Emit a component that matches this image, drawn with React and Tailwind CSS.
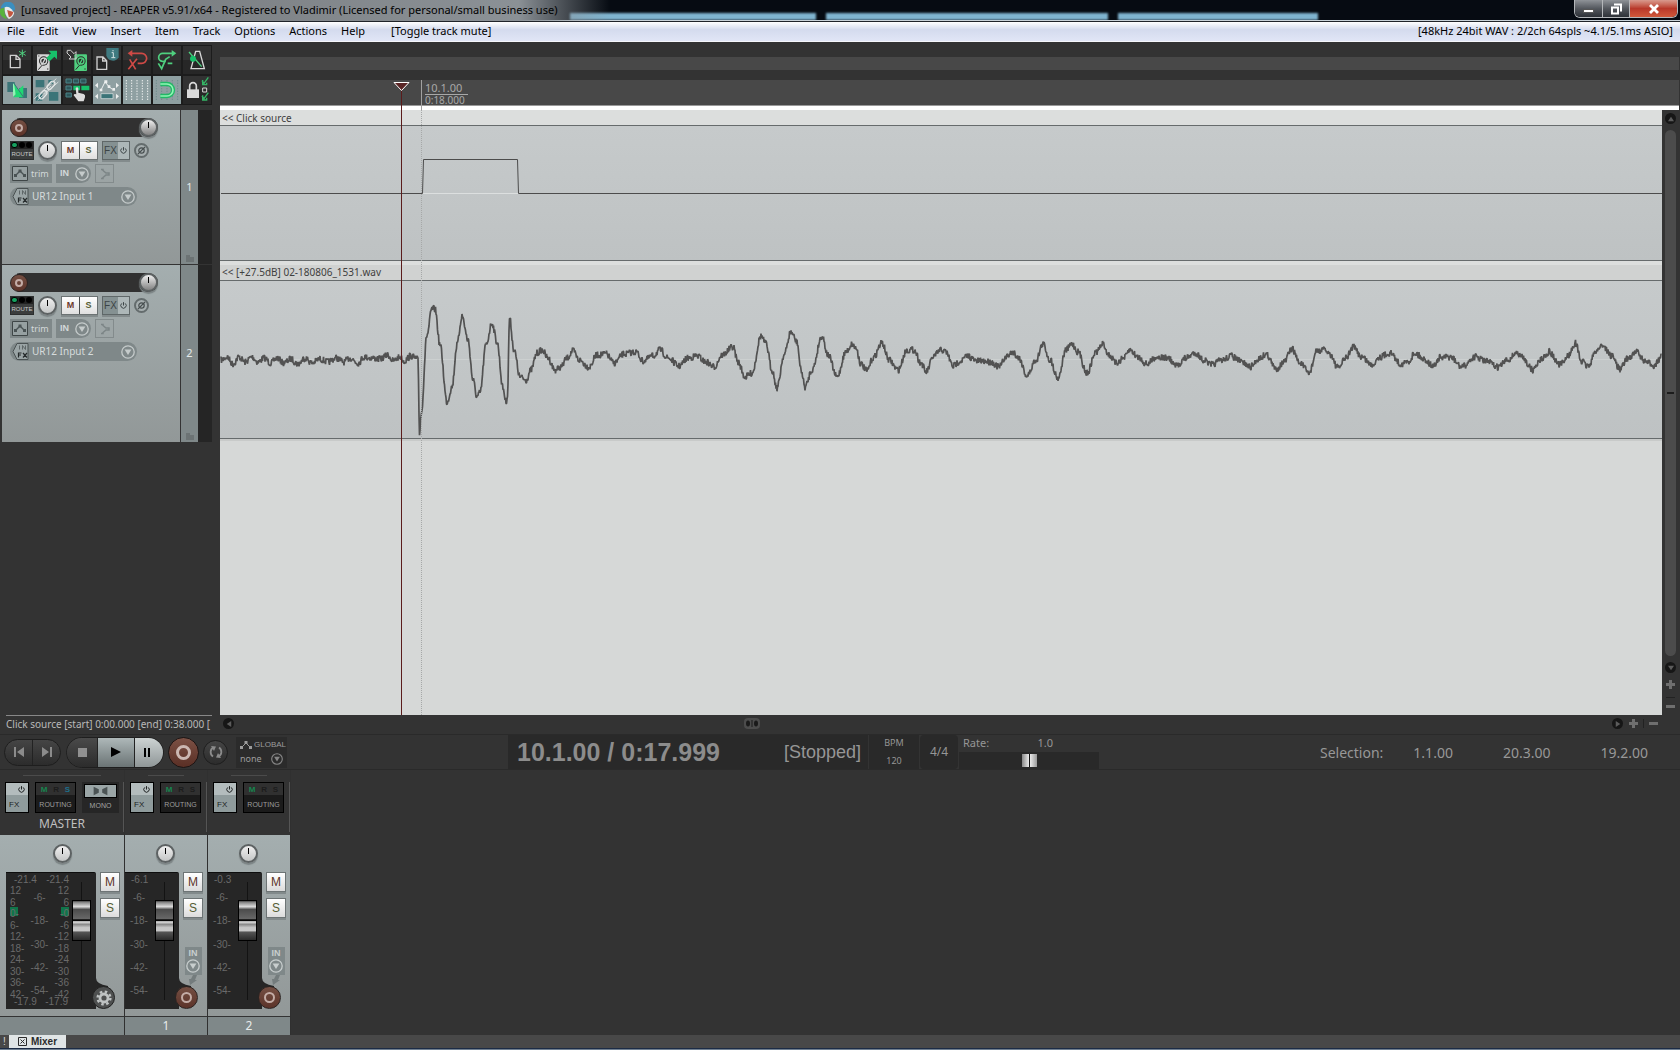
import React from 'react'

const MENU = ['File', 'Edit', 'View', 'Insert', 'Item', 'Track', 'Options', 'Actions', 'Help']

// [x, y] turning points of the recorded ringing
const WAVE = [
    221, 360, 227, 357, 233, 364, 239, 357, 245, 362, 252, 357, 258, 362, 264, 358, 271, 363, 277, 358, 284, 363, 291, 359,
    298, 364, 305, 358, 312, 363, 320, 359, 328, 362, 336, 358, 344, 362, 350, 358, 358, 363, 364, 357, 372, 358, 380, 359,
    388, 355, 393, 361, 400, 357, 404, 361, 411, 356, 417, 359, 418, 361, 419.5, 433, 421, 415, 427, 335, 432, 309, 435, 309,
    440, 345, 447, 402, 452, 387, 457, 345, 462, 316, 468, 340, 473, 380, 477, 397, 480, 393, 486, 345, 492, 323, 497, 342,
    503, 388, 506, 402, 507.5, 395, 509.5, 318, 514, 350, 520, 377, 526, 380, 531, 370, 537, 353, 542, 350, 548, 358, 555, 370,
    561, 367, 567, 358, 573, 351, 579, 360, 589, 367, 597, 355, 606, 354, 614, 363, 624, 354, 636, 352, 643, 361, 653, 356,
    660, 350, 668, 358, 679, 366, 688, 358, 697, 356, 706, 362, 714, 367, 722, 355, 733, 347, 738, 362, 745, 377, 752, 373,
    761, 336, 766, 344, 772, 370, 777, 388, 784, 355, 791, 332, 797, 342, 801, 370, 805, 387, 812, 370, 822, 336, 828, 355,
    837, 377, 846, 352, 852, 344, 856, 348, 861, 364, 867, 371, 873, 358, 882, 343, 889, 360, 898, 370, 907, 350, 914, 350,
    921, 363, 926, 372, 934, 356, 941, 350, 946, 352, 953, 366, 960, 361, 968, 356, 976, 361, 984, 361, 991, 362, 999, 367,
    1006, 357, 1013, 352, 1019, 358, 1027, 376, 1036, 360, 1043, 344, 1050, 360, 1058, 378, 1066, 350, 1072, 344, 1078, 352,
    1087, 373, 1096, 352, 1103, 344, 1109, 355, 1116, 363, 1124, 358, 1130, 350, 1138, 357, 1147, 364, 1156, 357, 1168, 358,
    1176, 366, 1186, 358, 1195, 353, 1204, 360, 1211, 365, 1222, 360, 1231, 356, 1242, 362, 1250, 367, 1260, 358, 1266, 354,
    1276, 369, 1284, 362, 1292, 349, 1300, 363, 1309, 373, 1317, 351, 1325, 350, 1330, 354, 1338, 368, 1346, 358, 1353, 347,
    1362, 357, 1372, 365, 1379, 357, 1390, 353, 1401, 364, 1408, 362, 1415, 353, 1424, 359, 1433, 366, 1440, 358, 1450, 357,
    1462, 367, 1475, 357, 1486, 361, 1498, 367, 1508, 360, 1516, 353, 1522, 357, 1533, 370, 1540, 360, 1549, 352, 1560, 365,
    1569, 355, 1575, 343, 1582, 362, 1588, 366, 1597, 350, 1602, 345, 1612, 356, 1620, 369, 1628, 358, 1637, 352, 1645, 362,
    1654, 365, 1662, 357,
]

const buildWave = () => {
    let seed = 7
    const rand = () => {
        seed = (seed * 16807) % 2147483647
        return seed / 2147483647 - 0.5
    }
    let d = ''
    for (let i = 0; i < WAVE.length - 2; i += 2) {
        const [x0, y0, x1, y1] = WAVE.slice(i, i + 4)
        const steps = Math.max(1, Math.round((x1 - x0) / 0.5))
        for (let s = 0; s < steps; s++) {
            const t = s / steps
            const k = (1 - Math.cos(Math.PI * t)) / 2
            const y = y0 + (y1 - y0) * k + rand() * 7
            d += `${d ? 'L' : 'M'}${(x0 + (x1 - x0) * t).toFixed(1)} ${y.toFixed(1)}`
        }
    }
    return d
}

const wavePath = buildWave()

const G = '#4fd07f'
const T = '#3b7478'

const Disk = ({ x, y, c }) => (
    <g transform={`translate(${x} ${y})`}>
        <rect width="38" height="50" rx="3" fill={c} />
        <circle cx="20" cy="20" r="14" fill="#2a2a2a" />
        <circle cx="20" cy="20" r="9" fill="none" stroke={c} strokeWidth="4" />
        <path d="M24 14L10 40l-6 2" stroke={c} strokeWidth="4" fill="none" />
        <path d="M4 46L16 32M30 44h4M4 5h3" stroke="#2a2a2a" strokeWidth="3" />
    </g>
)

const Doc = ({ x, y }) => (
    <path transform={`translate(${x} ${y})`} d="M2 2h18l11 11v26H2zM19 2v12h12" fill="none" stroke="#d0d0d0" strokeWidth="4" />
)

const TOOLS = [
    ['New project', false, <><Doc x={20} y={26} /><path d="M58 11v22M48 16l20 12M68 16L48 28" stroke={G} strokeWidth="3" /></>],
    ['Open project', false, <><Disk x={12} y={25} c="#d6d6d6" /><path d="M46 14h26v26l-8-8-14 14-10-10 14-14z" fill="#17c06a" /></>],
    ['Save project', false, <><Disk x={34} y={25} c={G} /><path d="M13 13h10l10 10 6-6v22H18l6-6-12-12z" fill="none" stroke="#d0d0d0" strokeWidth="3" /></>],
    ['Project settings', false, <><Doc x={10} y={31} /><path d="M40 6h37v28a20 20 0 0 1-37-6z" fill="#3f7a80" /><path d="M60 12v4M56 20h5v14M55 35h12" stroke="#d8e6e6" strokeWidth="3" fill="none" /></>],
    ['Undo', false, <><path d="M22 22h34a14 14 0 0 1 0 30H44" fill="none" stroke="#cf4a46" strokeWidth="5" /><path d="M28 12L14 22l14 10z" fill="#cf4a46" /><path d="M20 40l18 30M42 38L16 70" stroke="#cf4a46" strokeWidth="5" /></>],
    ['Redo', false, <><path d="M62 22H30a12 12 0 0 0-2 24h10" fill="none" stroke={G} strokeWidth="5" /><path d="M56 12l14 10-14 10z" fill={G} /><path d="M16 52l10 16 12-28 12-8M44 52h14" fill="none" stroke={G} strokeWidth="5" /></>],
    ['Metronome', false, <><path d="M38 16h12l14 52H24z" fill="none" stroke="#d6d6d6" strokeWidth="4" /><path d="M56 62L18 18" stroke={G} strokeWidth="4" /><circle cx="30" cy="38" r="9" fill="#17c06a" /></>],
    ['Auto-crossfade', true, <><path d="M13 18h22v30H13zM48 36h24v30H48z" fill={T} /><path d="M30 20v42l16-16z" fill="#8ff5b4" /><path d="M33 20l12 22 16-14v36H30l8-8z" fill="#1fd873" /><path d="M30 18l32 46" stroke={T} strokeWidth="3" /></>],
    ['Item grouping', true, <><path d="M8 12h26v22H8zM46 12h14v12H46zM48 48h28v26H48zM8 52h20v22H8z" fill={T} /><g fill="none" stroke="#e2e6e6" strokeWidth="4"><rect x="-14" y="-7" width="28" height="14" rx="7" transform="translate(54 28) rotate(-48)" /><rect x="-14" y="-7" width="28" height="14" rx="7" transform="translate(30 56) rotate(-48)" /><path d="M32 54L54 30M4 68L70 8M14 72l62-54" strokeWidth="2.5" /></g></>],
    ['Ripple editing', false, <><path d="M9 9h16v12H9zM31 9h16v12H31zM53 9h16v12H53zM9 30h16v12H9zM9 51h16v12H9z" fill="#2d565a" stroke="#4b8488" strokeWidth="3" /><path d="M31 29h20v14H31zM55 29h24v14H55z" fill="#17c06a" /><path d="M38 36q5-5 8 1v13l16 4q6 2 4 10l-4 12H46L32 58q1-6 8-3z" fill="#dcdcdc" /></>],
    ['Envelope move', true, <><path d="M24 42l12-24 12 14 10 8" fill="none" stroke="#eef0f0" strokeWidth="3" /><path d="M34 13h9v9h-9zM44 28h8v8h-8zM20 38h8v8h-8zM58 36h8v8h-8zM6 28l9-8v16zM78 28l-9-8v16zM6 61l9-8v16zM78 61l-9-8v16z" fill="#eef0f0" /><path d="M24 53h36v15H24z" fill={T} stroke="#e6eaea" strokeWidth="2" /></>],
    ['Grid', true, <path d="M10 12v62M26 12v62M42 12v62M58 12v62M74 12v62" stroke="#f0f2f2" strokeWidth="3" strokeDasharray="4 4" />],
    ['Snap', true, <><path d="M10 12v62M26 12v62M42 12v62M58 12v62M74 12v62" stroke="#6f8b8c" strokeWidth="3" strokeDasharray="4 4" /><path d="M22 24h20a17 17 0 0 1 0 36H22" fill="none" stroke="#22b866" strokeWidth="13" /><path d="M22 24h20a17 17 0 0 1 0 36H22" fill="none" stroke="#8ff5b4" strokeWidth="5" /></>],
    ['Locking', false, <><path d="M12 40h36v26H12z" fill="#dadada" /><path d="M20 42V30a10 10 0 0 1 20 0v12" fill="none" stroke="#dadada" strokeWidth="5" /><path d="M59 36h12v12H59z" fill="none" stroke="#dadada" strokeWidth="3" /><path d="M57 14l6 8L76 4M57 60l6 8L76 50M59 12v14h12V20M59 58v14h12v-7" fill="none" stroke="#35b465" strokeWidth="4" /></>],
]

const Power = ({ className }) => (
    <svg viewBox="0 0 12 12" className={className} fill="none" stroke="currentColor" strokeWidth="1.3">
        <path d="M6 1.5v4.5M3.7 3.2a3.6 3.6 0 1 0 4.6 0" />
    </svg>
)

const Drop = ({ className }) => (
    <svg viewBox="0 0 14 14" className={className}>
        <circle cx="7" cy="7" r="6.2" fill="none" stroke="currentColor" strokeWidth="1.3" />
        <path d="M3.6 4.5h6.8L7 10z" fill="currentColor" />
    </svg>
)

const Knob = ({ label, className }) => (
    <button aria-label={label} className={`rounded-full border-2 border-[#5d6263] flex justify-center pt-[2px] shadow-[0_2px_1px_#7c8485] ${className}`}>
        <span className="w-px h-[6px] bg-black" />
    </button>
)

const RecButton = ({ className }) => (
    <button aria-label="Record arm" className={`rounded-full bg-linear-to-b from-[#744f43] to-[#5c3329] border border-[#2c2422] flex items-center justify-center ${className}`}>
        <span className="w-1/2 h-1/2 rounded-full border-2 border-[#c3aca6]" />
    </button>
)

const TrackPanel = ({ num, input, className }) => (
    <div className={`flex ${className}`}>
        <div className="w-[178px] bg-linear-to-b from-[#a4aeaf] to-[#929898] pl-2 pt-2">
            <div className="flex items-center justify-between w-[148px] h-[19px] bg-linear-to-r from-transparent from-5% via-[#313131] via-5% to-[#313131] rounded-full">
                <RecButton className="w-[18px] h-[18px]" />
                <Knob label="Volume" className="w-[19px] h-[19px] bg-linear-to-b from-[#f0f0f0] to-[#828282] border-[#2f3030]" />
            </div>
            <div className="flex items-center h-[19px] mt-1">
                <button className="w-6 h-[19px] bg-[#3b3d3d] border border-[#2c2e2e] text-[#c7caca] font-['Liberation_Sans'] text-[6px] leading-[9px] flex flex-col items-center justify-between">
                    <span className="w-full flex gap-px h-[7px] bg-[#222]">
                        <span className="w-[7px] h-[6px] rounded-full bg-[#16a05e] border border-black" />
                        <span className="w-[6px] h-[6px] rounded-full bg-black" />
                        <span className="w-[6px] h-[6px] rounded-full bg-black" />
                    </span>
                    ROUTE
                </button>
                <Knob label="Pan" className="ml-1 w-[19px] h-[19px] bg-linear-to-b from-[#efefef] to-[#c4c6c6]" />
                <div className="ml-1 flex border border-[#6b7273] divide-x divide-[#4b4f4f] font-['Liberation_Sans'] font-bold text-[9px] shadow-[0_2px_0_#838b8c]">
                    <button className="w-[18px] h-[17px] bg-linear-to-b from-white to-[#dfdfdf] text-[#6b3a2c]">M</button>
                    <button className="w-[17px] h-[17px] bg-linear-to-b from-white to-[#dfdfdf] text-[#565d34]">S</button>
                </div>
                <div className="ml-1 flex border border-[#5f6768] font-['Liberation_Sans'] text-[10px] text-[#3c4446] shadow-[0_2px_0_#838b8c]">
                    <button className="w-[15px] h-[17px] bg-[#859192]">FX</button>
                    <button aria-label="FX bypass" className="w-[11px] h-[17px] bg-[#adb7b8] flex items-center justify-center"><Power className="w-[9px] h-[9px]" /></button>
                </div>
                <button aria-label="Phase" className="ml-1 w-[15px] h-[15px] rounded-full border-2 border-[#646c6d] bg-[#a6aeaf] flex items-center justify-center">
                    <svg viewBox="0 0 10 10" className="w-[9px] h-[9px]" fill="none" stroke="#454c4d" strokeWidth="1.3"><circle cx="5" cy="5" r="3" /><path d="M1 9l8-8" /></svg>
                </button>
            </div>
            <div className="flex items-center h-[19px] mt-1 gap-1 text-[#d3d9d9] text-[9px]">
                <button className="w-[42px] h-[19px] bg-[#7f8889] flex items-center gap-[3px] pl-[2px]">
                    <svg viewBox="0 0 16 15" className="w-4 h-[15px]">
                        <path d="M.5.5h15v14H.5z" fill="#96a0a1" stroke="#3f4647" />
                        <path d="M3 10l5-5 5 5" fill="none" stroke="#4a5354" strokeWidth="1.4" />
                        <path d="M2 8h3v3H2zM6.500 3.500h3v3h-3zM11 8h3v3h-3z" fill="#4a5354" />
                    </svg>
                    trim
                </button>
                <button className="w-[35px] h-[19px] bg-[#7f8889] rounded-r-full flex items-center justify-between pl-1 pr-[2px] font-['Liberation_Sans'] font-bold">
                    IN<Drop className="w-[14px] h-[14px] text-[#c5cbcb]" />
                </button>
                <button aria-label="Record mode" className="w-[19px] h-[19px] border border-[#838b8c] flex items-center justify-center">
                    <svg viewBox="0 0 12 12" className="w-3 h-3" fill="none" stroke="#7c8586" strokeWidth="1.5"><path d="M2 1.500h2v1l3 2.500h3v2H7L4 9.500v1H2" /></svg>
                </button>
            </div>
            <button className="mt-1 w-[127px] h-[19px] bg-[#7f8889] rounded-full flex items-center pl-[2px] pr-[2px] text-[10px] text-[#d6dcdc]">
                <svg viewBox="0 0 17 17" className="w-[17px] h-[17px]" fill="none">
                    <path d="M5 .5h11v16H5l-4-8z" fill="#9aa4a5" stroke="#4b5253" />
                    <path d="M7.500 2.500v4M10.500 6.500v-4l3 4v-4" stroke="#5f6768" />
                    <path d="M6.500 14.500v-4.500h3M6.500 12h2.500M11 10l4 4.500M15 10l-4 4.500" stroke="#262b2c" strokeWidth="1.200" />
                </svg>
                <span className="ml-[3px]">{input}</span>
                <Drop className="ml-auto w-[14px] h-[14px] text-[#c5cbcb]" />
            </button>
        </div>
        <div className="ml-px w-[17px] bg-[#7f8889] flex flex-col items-center text-[11px] text-[#e4e8e8]">
            <span className="my-auto">{num}</span>
            <svg viewBox="0 0 8 7" className="w-2 h-[7px] mb-[2px] -mt-[9px]"><path d="M0 0h4v2h4v5H0z" fill="#6c7374" /></svg>
        </div>
        <div className="w-[14px] bg-[#252525]" />
    </div>
)

const ScrollArrow = ({ dir, label }) => (
    <button aria-label={label} className="w-[11px] h-[11px] rounded-full bg-[#161616] flex items-center justify-center">
        <svg viewBox="0 0 8 8" className="w-[6px] h-[6px]" fill="#5c5c5c"><path d={dir} /></svg>
    </button>
)

const UP = 'M4 1l4 6H0z'
const DOWN = 'M0 1h8L4 7z'
const LEFT = 'M7 0v8L1 4z'
const RIGHT = 'M1 0v8l6-4z'

const Plus = () => <button aria-label="Zoom in" className="w-[9px] h-[9px]"><svg viewBox="0 0 9 9" fill="#6f6f6f"><path d="M3 0h3v3h3v3H6v3H3V6H0V3h3z" /></svg></button>
const Minus = () => <button aria-label="Zoom out" className="w-[9px] h-[3px] bg-[#6f6f6f]" />

const Fader = ({ label }) => (
    <div className="relative w-[19px] h-[118px] bg-linear-to-r from-transparent from-45% via-black via-45% to-transparent to-55%">
        <input
            type="range"
            aria-label={label}
            defaultValue="77"
            className="absolute inset-0 w-[19px] h-[118px] appearance-none bg-transparent [writing-mode:vertical-lr] [direction:rtl] [&::-webkit-slider-thumb]:appearance-none [&::-webkit-slider-thumb]:w-[19px] [&::-webkit-slider-thumb]:h-[41px] [&::-webkit-slider-thumb]:border [&::-webkit-slider-thumb]:border-black [&::-webkit-slider-thumb]:bg-[linear-gradient(#4a4a4a_0%,#8a8a8a_4%,#d8d8d8_14%,#8c8c8c_19%,#4a4a4a_20%,#686868_46%,#050505_48%,#050505_51%,#e8e8e8_53%,#8a8a8a_60%,#c4c4c4_68%,#c8c8c8_76%,#555_80%,#2b2b2b_100%)]"
        />
    </div>
)

const Routing = ({ solo }) => (
    <button className="w-[41px] h-[31px] border border-black bg-[#1b1b1b] text-[#9d9d9d] font-['Liberation_Sans'] text-[7px] flex flex-col justify-start">
        <span className="w-full shrink-0 flex justify-around h-3 leading-[13px] bg-[#303030] px-[2px] text-[8px] font-bold">
            <span className="text-[#17854f]">M</span>
            <span className="text-[#1c1c1c]">R</span>
            <span className={solo}>S</span>
        </span>
        <span className="w-full leading-5">ROUTING</span>
    </button>
)

const FxButton = () => (
    <button className="w-6 h-[31px] border border-black bg-[#8f9b9c] text-[#1c1f1f] font-['Liberation_Sans'] text-[8px] flex flex-col justify-start items-start">
        <span className="w-full h-3 shrink-0 bg-[#b3bcbd] flex items-center justify-end pr-[2px]"><Power className="w-[9px] h-[9px]" /></span>
        <span className="pl-[3px] leading-5">FX</span>
    </button>
)

const MuteSolo = ({ children }) => (
    <div className="flex flex-col items-center font-['Liberation_Sans'] text-xs">
        <button className="w-5 h-5 bg-linear-to-b from-white to-[#dcdcdc] border border-[#6d7475] text-[#5b3428] shadow-[0_2px_0_#828a8b]">M</button>
        <button className="mt-[6px] w-5 h-5 bg-linear-to-b from-white to-[#dcdcdc] border border-[#6d7475] text-[#565d34] shadow-[0_2px_0_#828a8b]">S</button>
        {children}
    </div>
)

const Corner = () => (
    <svg viewBox="0 0 12 12" className="absolute left-full bottom-[19px] w-3 h-3"><path d="M0 0q0 6 12 8v4H0z" fill="#262626" /></svg>
)

const DB = ['-6-', '-18-', '-30-', '-42-', '-54-']

const Scale = ({ values, className }) => (
    <div className={`flex flex-col justify-between leading-[10px] ${className}`}>
        {values.map((v, i) => <span key={i}>{v}</span>)}
    </div>
)

const MixerStrip = ({ num, peak }) => (
    <div className="w-[83px] flex flex-col border-r border-[#303030]">
        <div className="h-[65px] bg-[#333] pt-[5px]">
            <div className="mx-auto w-9 h-px bg-[#4b4b4b]" />
            <div className="mt-[6px] h-[50px] flex gap-[6px] pl-[5px] border-r border-[#555]">
                <FxButton />
                <Routing solo="text-[#1c1c1c]" />
            </div>
        </div>
        <div className="h-[181px] bg-linear-to-b from-[#a4aeaf] to-[#929898] flex flex-col pt-[9px]">
            <Knob label="Pan" className="ml-[31px] w-[19px] h-[19px] bg-linear-to-b from-[#efefef] to-[#c4c6c6]" />
            <div className="flex mt-[9px] gap-1">
                <div className="relative w-[54px] h-[137px] bg-[#262626] border-t border-[#0d0d0d] rounded-tr-xs font-['Liberation_Sans'] text-[10px] text-[#6a6a6a] flex">
                    <div className="w-[30px] pl-[6px] pt-[2px]">
                        <div className="leading-[10px]">{peak}</div>
                        <Scale values={DB} className="mt-2 h-[103px] items-center w-4" />
                    </div>
                    <div className="pt-[9px]"><Fader label={`Volume ${num}`} /></div>
                    <Corner />
                    <RecButton className="absolute -right-[19px] bottom-0 w-[23px] h-[23px]" />
                </div>
                <MuteSolo>
                    <button className="mt-[29px] w-[17px] h-7 bg-[#7f8889] text-[#c8cece] text-[9px] font-bold flex flex-col items-center">
                        IN<Drop className="w-[14px] h-[14px] shrink-0" />
                    </button>
                    <svg viewBox="0 0 8 10" className="w-2 h-[10px]"><path d="M4 0h4L6 5h2L1 10 0 4h2z" fill="#747c7d" /></svg>
                </MuteSolo>
            </div>
        </div>
        <div className="mt-px h-[18px] bg-[#7f8889] text-center text-xs leading-[18px] text-[#e8ecec]">{num}</div>
    </div>
)

const LEFT_DB = ['12', '6', '0-', '6-', '12-', '18-', '24-', '30-', '36-', '42-']
const RIGHT_DB = ['12', '6', '-0', '-6', '-12', '-18', '-24', '-30', '-36', '-42']

const MasterStrip = () => (
    <div className="w-[125px] flex flex-col border-r border-[#303030]">
        <div className="h-[65px] bg-[#333] pt-[5px]">
            <div className="mx-auto w-[78px] h-px bg-[#4b4b4b]" />
            <div className="mt-[6px] h-[50px] pl-[5px] border-r border-[#555]">
                <div className="flex gap-[6px]">
                    <FxButton />
                    <Routing solo="text-[#1d6f8c]" />
                    <button className="w-[37px] h-[31px] bg-[#262626] text-[#a4a4a4] font-['Liberation_Sans'] text-[7px] px-[2px] pt-[2px]">
                        <svg viewBox="0 0 32 14" className="block w-full h-[14px] bg-[#9aa5a6] border border-black"><path d="M8 2l6 3v4l-6 3zM24 2l-6 3v4l6 3z" fill="#4b5354" /></svg>
                        <span className="block leading-[15px]">MONO</span>
                    </button>
                </div>
                <div className="text-xs leading-[22px] text-center text-[#c0c0c0] pr-1">MASTER</div>
            </div>
        </div>
        <div className="h-[181px] bg-linear-to-b from-[#a4aeaf] to-[#929898] flex flex-col pt-[9px]">
            <Knob label="Master pan" className="mx-auto w-[19px] h-[19px] bg-linear-to-b from-[#efefef] to-[#c4c6c6]" />
            <div className="flex mt-[9px] pl-[6px] gap-1">
                <div className="relative w-[90px] h-[137px] bg-[#262626] border-t border-[#0d0d0d] rounded-tr-xs font-['Liberation_Sans'] text-[10px] text-[#6a6a6a] flex">
                    <div className="w-[66px] pl-1 pr-[3px] pt-[2px]">
                        <div className="flex justify-between pl-1 leading-[10px]"><span>-21.4</span><span>-21.4</span></div>
                        <div className="flex justify-between mt-px h-[114px]">
                            <Scale values={LEFT_DB} className="h-[114px] w-4 bg-[linear-gradient(#10754a,#10754a)] bg-no-repeat bg-size-[8px_9px] bg-position-[0_21px]" />
                            <Scale values={DB} className="mt-[7px] h-[103px] items-center" />
                            <Scale values={RIGHT_DB} className="h-[114px] w-4 items-end bg-[linear-gradient(#10754a,#10754a)] bg-no-repeat bg-size-[8px_9px] bg-position-[8px_21px]" />
                        </div>
                        <div className="absolute bottom-[2px] left-2 w-[54px] flex justify-between leading-[10px]"><span>-17.9</span><span>-17.9</span></div>
                    </div>
                    <div className="pt-[9px]"><Fader label="Master volume" /></div>
                    <Corner />
                    <button aria-label="Master settings" className="absolute -right-[19px] bottom-0 w-[23px] h-[23px] rounded-full bg-[#4e5050] border border-[#222] flex items-center justify-center">
                        <svg viewBox="0 0 20 20" className="w-4 h-4" fill="none" stroke="#bfc3c3">
                            <circle cx="10" cy="10" r="5" strokeWidth="3.500" />
                            <circle cx="10" cy="10" r="8" strokeWidth="3" strokeDasharray="3.140 3.140" />
                        </svg>
                    </button>
                </div>
                <MuteSolo />
            </div>
        </div>
        <div className="mt-px h-[18px] bg-[#7f8889]" />
    </div>
)

const TitleBar = () => (
    <div className="flex items-start justify-between h-[22px] bg-[#060b12] border-b border-[#20242a] relative overflow-hidden">
        <div className="absolute inset-x-0 bottom-px flex h-[7px] pl-[570px] gap-[10px] blur-[1px]">
            <span className="w-[246px] bg-[#7fb4cf]" />
            <span className="w-[282px] bg-[#7fb4cf]" />
            <span className="w-[200px] bg-[#7fb4cf]" />
        </div>
        <div className="absolute inset-x-0 bottom-0 h-px bg-[#c9d2d8]" />
        <div className="relative flex items-center h-[21px] w-[610px] bg-linear-to-r from-[#74777a] via-[#8b9196] via-85% to-transparent">
            <svg viewBox="0 0 18 18" className="w-4 h-[18px]">
                <path d="M1 6a8 8 0 0 1 16 1l-3 3-5-4z" fill="#3b8fc0" />
                <path d="M5 5q4-2 8 2l3 4q-1 5-6 7-5-4-5-13z" fill="#e6eaea" />
                <path d="M0 7l5-2q-1 8 3 13a9 9 0 0 1-8-11z" fill="#58b33c" />
                <path d="M8 8l7 2q-1 5-5 6z" fill="#c2563f" />
            </svg>
            <span className="ml-[5px] text-[11px] text-black whitespace-nowrap">
                [unsaved project] - REAPER v5.91/x64 - Registered to Vladimir (Licensed for personal/small business use)
            </span>
        </div>
        <div className="relative flex mr-[2px] h-[18px] border border-t-0 border-[#b4b7ba] rounded-b-md overflow-hidden divide-x divide-[#b4b7ba]">
            <button aria-label="Minimize" className="w-7 bg-linear-to-b from-[#8f9398] via-[#54585e] via-50% to-[#2e3238] flex justify-center items-end pb-1"><span className="w-[11px] h-[4px] bg-white border border-[#555]" /></button>
            <button aria-label="Restore" className="w-[27px] bg-linear-to-b from-[#8f9398] via-[#54585e] via-50% to-[#2e3238] flex justify-center items-center">
                <svg viewBox="0 0 12 12" className="w-3 h-3" fill="none" stroke="#fff" strokeWidth="2"><path d="M2 4.500h6v6H2zM4 1.500h7v7" /></svg>
            </button>
            <button aria-label="Close" className="w-[47px] bg-linear-to-b from-[#d89a8e] via-[#b8382a] via-50% to-[#d0583a] flex justify-center items-center">
                <svg viewBox="0 0 12 10" className="w-3 h-[10px]" stroke="#fff" strokeWidth="2.800"><path d="M2 1l8 8M10 1L2 9" /></svg>
            </button>
        </div>
    </div>
)

const Transport = () => (
    <div className="flex items-start h-9 bg-[#333] border-y border-[#2a2a2a]">
        <div className="flex items-center h-[34px] pl-1 w-[508px] shrink-0">
            <div className="flex h-[27px] w-[57px] rounded-full overflow-hidden border border-[#1e1e1e] bg-linear-to-b from-[#454545] to-[#2c2c2c] divide-x divide-[#222]">
                <button aria-label="Go to start" className="flex-1 flex items-center justify-center"><svg viewBox="0 0 12 10" className="w-3 h-[10px]" fill="#8b8b8b"><path d="M1 0h2v10H1zM11 0v10L4 5z" /></svg></button>
                <button aria-label="Go to end" className="flex-1 flex items-center justify-center"><svg viewBox="0 0 12 10" className="w-3 h-[10px]" fill="#8b8b8b"><path d="M9 0h2v10H9zM1 0v10l7-5z" /></svg></button>
            </div>
            <div className="ml-[5px] flex h-[31px] w-[98px] rounded-full overflow-hidden border border-[#1e1e1e] divide-x divide-[#222]">
                <button aria-label="Stop" className="w-[31px] bg-linear-to-b from-[#4a4a4a] to-[#2c2c2c] flex items-center justify-center"><span className="w-[9px] h-[9px] bg-[#909090]" /></button>
                <button aria-label="Play" className="w-[37px] bg-linear-to-b from-[#aeb8b9] to-[#6b7475] flex items-center justify-center"><svg viewBox="0 0 10 10" className="w-[10px] h-[10px]"><path d="M0 0v10l10-5z" /></svg></button>
                <button aria-label="Pause" className="flex-1 bg-linear-to-b from-[#cdd3d3] to-[#8f9697] flex items-center justify-center gap-[2px] pr-1"><span className="w-[2px] h-[9px] bg-black" /><span className="w-[2px] h-[9px] bg-black" /></button>
            </div>
            <button aria-label="Record" className="ml-1 w-[31px] h-[31px] rounded-full border border-[#1d1514] bg-linear-to-b from-[#7c5145] to-[#5a2f25] flex items-center justify-center"><span className="w-[15px] h-[15px] rounded-full border-[3px] border-[#cbb7b1]" /></button>
            <button aria-label="Repeat" className="ml-1 w-[25px] h-[25px] rounded-full border border-[#1e1e1e] bg-linear-to-b from-[#454545] to-[#2c2c2c] flex items-center justify-center">
                <svg viewBox="0 0 14 14" className="w-[14px] h-[14px]" fill="none" stroke="#8b8b8b" strokeWidth="1.800"><path d="M4 11.500A5.300 5.300 0 0 1 4.500 2.400M10 2.500a5.300 5.300 0 0 1-.5 9.100" /><path d="M2 1l5 .5L5 6zM12 13l-5-.5L9 8z" fill="#8b8b8b" stroke="none" /></svg>
            </button>
            <button className="ml-2 w-[51px] h-[31px] bg-[#2b2b2b] text-[#9c9c9c] text-[9px] px-1">
                <span className="flex items-center gap-[2px] font-['Liberation_Sans'] text-[8px] h-[14px]">
                    <svg viewBox="0 0 12 8" className="w-3 h-2 shrink-0"><path d="M2 6l4-4 4 4" fill="none" stroke="#9c9c9c" /><path d="M0 5h3v3H0zM4.500 0h3v3h-3zM9 5h3v3H9z" fill="#9c9c9c" /></svg>
                    GLOBAL
                </span>
                <span className="flex items-center justify-between h-[15px]">none<Drop className="w-3 h-3 text-[#868686]" /></span>
            </button>
        </div>
        <div className="flex h-[34px] gap-px text-[#969696]">
            <div className="w-[360px] bg-[#292929] flex items-center justify-between pl-[9px] pr-[7px] font-['Liberation_Sans']">
                <span className="text-[25px] font-bold leading-none text-[#8c8c8c]">10.1.00 / 0:17.999</span>
                <span className="text-lg">[Stopped]</span>
            </div>
            <div className="w-[50px] bg-[#292929] flex flex-col items-center justify-between text-[9px] leading-4"><span>BPM</span><span>120</span></div>
            <div className="w-[38px] bg-[#292929] rounded-sm flex items-center justify-center text-xs">4/4</div>
            <div className="w-[140px]">
                <div className="flex h-[17px] justify-between items-center pl-1 pr-[46px] text-[11px]"><label htmlFor="rate">Rate:</label><span>1.0</span></div>
                <input id="rate" type="range" className="block w-full h-[17px] appearance-none bg-[#292929] [&::-webkit-slider-thumb]:appearance-none [&::-webkit-slider-thumb]:w-[15px] [&::-webkit-slider-thumb]:h-[13px] [&::-webkit-slider-thumb]:bg-[linear-gradient(90deg,#888,#e8e8e8_45%,#111_46%,#111_54%,#e8e8e8_55%,#999)]" />
            </div>
        </div>
        <div className="ml-auto flex h-9 items-center text-sm leading-none text-[#989898] gap-[50px] pr-8">
            <span className="-mr-5">Selection:</span>
            <span>1.1.00</span>
            <span>20.3.00</span>
            <span>19.2.00</span>
        </div>
    </div>
)

const App = () => {
    return (
        <div className="min-h-screen flex flex-col bg-[#333] font-['Noto_Sans',sans-serif] select-none overflow-hidden">
            <TitleBar />
            <div className="flex items-center justify-between h-5 bg-linear-to-b from-white via-[#d4dbee] via-40% to-[#e1e6f6] border-b border-[#f6f7fb] text-[11px] text-black px-[7px]">
                <div className="flex gap-[14px]">
                    {MENU.map((m) => <button key={m}>{m}</button>)}
                    <button className="ml-3">[Toggle track mute]</button>
                </div>
                <span>[48kHz 24bit WAV : 2/2ch 64spls ~4.1/5.1ms ASIO]</span>
            </div>

            <div className="flex flex-1">
                <div className="w-[220px] shrink-0 flex flex-col pl-[2px]">
                    <div className="mt-[3px] grid grid-cols-7 w-[210px] gap-[2px] bg-[#1c1c1c] p-px">
                        {TOOLS.map(([name, active, art]) => (
                            <button key={name} aria-label={name} className={active ? 'h-7 bg-[#8fa0a2]' : 'h-7 bg-linear-to-b from-[#323232] from-50% to-[#272727] to-50%'}>
                                <svg viewBox="0 0 84 84" className="w-7 h-7">{art}</svg>
                            </button>
                        ))}
                    </div>
                    <TrackPanel num="1" input="UR12 Input 1" className="mt-[5px] h-[154px]" />
                    <TrackPanel num="2" input="UR12 Input 2" className="mt-px h-[177px]" />
                    <div className="mt-auto ml-1 mr-2 h-[19px] border-t border-[#888] text-[10px] leading-[16px] text-[#b9b9b9] whitespace-nowrap overflow-hidden">
                        Click source [start] 0:00.000 [end] 0:38.000 [
                    </div>
                </div>

                <div className="flex-1 min-w-0 flex flex-col">
                    <div className="relative flex-1 flex flex-col">
                        <div className="mt-[15px] mr-px h-[13px] bg-[#484848]" />
                        <div className="mt-[10px] mr-px h-[26px] bg-[#484848] border-b border-[#9a9a9a]">
                            <div className="ml-[205px] w-[43px] text-[11px] leading-3 text-[#a8a8a8] pt-[2px]">
                                <div className="border-b border-[#a8a8a8] h-[13px]">10.1.00</div>
                                <div className="text-[10px] leading-[11px]">0:18.000</div>
                            </div>
                        </div>
                        <div className="h-1 mr-px bg-white" />
                        <div className="flex-1 flex">
                            <div className="flex-1 min-w-0 bg-[#d6d8d7] text-[10px] text-[#404040]">
                                <div className="h-4 bg-[#dcdedd] border-b border-[#666b6c] leading-4 pl-[2px]">&lt;&lt; Click source</div>
                                <svg viewBox="220 126 1442 134" preserveAspectRatio="none" className="block w-full h-[134px] bg-linear-to-b from-[#c6cacb] to-[#bec2c3]">
                                    <path d="M422 193.500h97" stroke="#dcdfdf" />
                                    <path d="M221 193.500h201.500L423.500 159.500h94l1 34H1662" fill="none" stroke="#4c4c4c" />
                                </svg>
                                <div className="h-[21px] border-y border-[#666b6c] bg-linear-to-b from-[#dcdedd] from-20% to-[#d0d2d1] to-20% pt-[2px] leading-[19px] pl-[2px]">&lt;&lt; [+27.5dB] 02-180806_1531.wav</div>
                                <svg viewBox="220 281 1442 157" preserveAspectRatio="none" className="block w-full h-[157px] bg-linear-to-b from-[#c6cacb] to-[#bec2c3]">
                                    <path d="M221 359.500H1662" stroke="#ccd0d0" />
                                    <path d={wavePath} fill="none" stroke="#525252" strokeWidth="1.700" strokeLinejoin="bevel" />
                                </svg>
                                <div className="h-[3px] border-t border-[#666b6c] bg-[#c8cac9]" />
                            </div>
                            <div className="w-[18px] flex flex-col items-center pt-[3px] pr-px">
                                <ScrollArrow dir={UP} label="Scroll up" />
                                <div className="my-[6px] w-[11px] flex-1 rounded-full bg-[#4c4c4c] flex flex-col items-center justify-center"><span className="w-[7px] h-[2px] bg-[#1c1c1c]" /></div>
                                <ScrollArrow dir={DOWN} label="Scroll down" />
                                <div className="h-[42px] flex flex-col items-center justify-between pt-[7px] pb-[7px]">
                                    <Plus />
                                    <span className="w-[9px] h-px bg-[#222]" />
                                    <Minus />
                                </div>
                            </div>
                        </div>
                        <div className="absolute top-[38px] bottom-0 left-[201px] w-px bg-linear-to-b from-[#a0a0a0] from-[30px] to-transparent to-[30px]" />
                        <div className="absolute top-[68px] bottom-0 left-[201px] border-l border-dotted border-[#a6a8a8]" />
                        <div className="absolute top-[40px] bottom-0 left-[181px] w-px bg-[#5a1c1c]" />
                        <svg viewBox="0 0 17 10" className="absolute top-[40px] left-[173px] w-[17px] h-[10px]"><path d="M1 .5h15L8.500 8.500z" fill="#5a2626" stroke="#fff" /></svg>
                    </div>
                    <div className="h-[19px] flex items-start pt-[3px] pl-[3px] pr-[22px]">
                        <ScrollArrow dir={LEFT} label="Scroll left" />
                        <div className="flex-1">
                            <button aria-label="Scroll thumb" className="block ml-[37%] w-4 h-[11px] rounded-[4px] bg-[#4c4c4c]">
                                <svg viewBox="0 0 16 11" className="w-4 h-[11px]" fill="#1a1a1a"><ellipse cx="4" cy="5.500" rx="2" ry="3" /><path d="M7.500 2h1v7h-1z" /><ellipse cx="12" cy="5.500" rx="2" ry="3" /></svg>
                            </button>
                        </div>
                        <ScrollArrow dir={RIGHT} label="Scroll right" />
                        <div className="flex items-center ml-[6px] h-[11px] gap-[5px]"><Plus /><span className="w-px h-[9px] bg-[#222]" /><Minus /></div>
                    </div>
                </div>
            </div>

            <Transport />

            <div className="flex h-[265px]">
                <MasterStrip />
                <MixerStrip num="1" peak="-6.1" />
                <MixerStrip num="2" peak="-0.3" />
            </div>
            <div className="flex h-[13px] bg-[#484848] font-['Liberation_Sans'] text-[10px] leading-[14px]">
                <span className="w-[9px] text-center text-[#d8d8d8]">!</span>
                <button className="w-[57px] bg-[#e0e5e6] font-bold text-[#2b2b2b] flex items-center justify-center gap-1">
                    <svg viewBox="0 0 9 9" className="w-[9px] h-[9px]" fill="none" stroke="#2b2b2b"><path d="M.5.5h8v8h-8zM2.500 2.500l4 4M6.500 2.500l-4 4" /></svg>
                    Mixer
                </button>
            </div>
            <div className="h-[2px] bg-[#1c2b44] border-b border-[#6f7f90]" />
        </div>
    )
}

export default App
